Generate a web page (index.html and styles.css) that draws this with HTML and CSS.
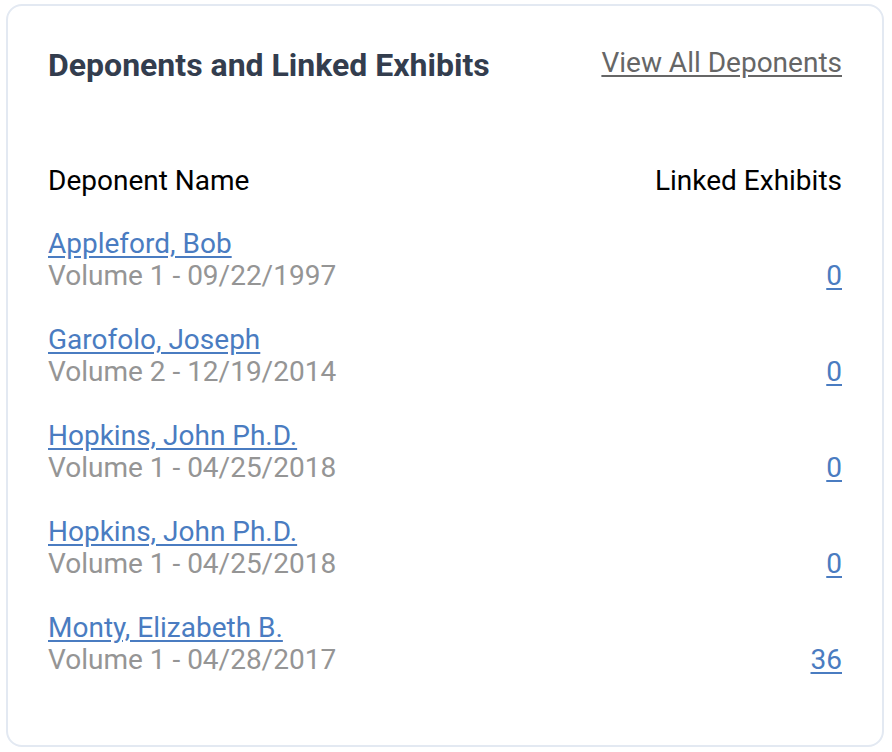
FILE: index.html
```html
<!DOCTYPE html>
<html>
<head>
<meta charset="utf-8">
<link rel="stylesheet" href="styles.css">
</head>
<body>
<div class="card">
  <div class="card-head">
    <h2 class="title">Deponents and Linked Exhibits</h2>
    <a class="view-all" href="#">View All Deponents</a>
  </div>
  <div class="table-head">
    <span>Deponent Name</span>
    <span>Linked Exhibits</span>
  </div>
  <ul class="rows">
    <li class="row">
      <div class="who"><a class="name" href="#">Appleford, Bob</a><span class="vol">Volume 1 - 09/22/1997</span></div>
      <a class="count" href="#">0</a>
    </li>
    <li class="row">
      <div class="who"><a class="name" href="#">Garofolo, Joseph</a><span class="vol">Volume 2 - 12/19/2014</span></div>
      <a class="count" href="#">0</a>
    </li>
    <li class="row">
      <div class="who"><a class="name" href="#">Hopkins, John Ph.D.</a><span class="vol">Volume 1 - 04/25/2018</span></div>
      <a class="count" href="#">0</a>
    </li>
    <li class="row">
      <div class="who"><a class="name" href="#">Hopkins, John Ph.D.</a><span class="vol">Volume 1 - 04/25/2018</span></div>
      <a class="count" href="#">0</a>
    </li>
    <li class="row">
      <div class="who"><a class="name" href="#">Monty, Elizabeth B.</a><span class="vol">Volume 1 - 04/28/2017</span></div>
      <a class="count" href="#">36</a>
    </li>
  </ul>
</div>
</body>
</html>
```
FILE: styles.css
```css
html, body {
  margin: 0;
  padding: 0;
  background: #ffffff;
}
body {
  font-family: Roboto, "Liberation Sans", Arial, sans-serif;
  padding: 4px 8px 0 6px;
}
.card {
  box-sizing: border-box;
  width: 878px;
  height: 743px;
  border: 2px solid #e3e9f2;
  border-radius: 16px;
  padding: 39px 40px 0 40px;
  background: #fff;
}
.card-head {
  display: flex;
  justify-content: space-between;
  align-items: flex-start;
}
.title {
  margin: 0;
  font-size: 32px;
  line-height: 40px;
  font-weight: 700;
  color: #333d4e;
}
.view-all {
  font-size: 28px;
  line-height: 36px;
  color: #666666;
  text-decoration: underline;
  text-underline-offset: 3px;
}
.table-head {
  display: flex;
  justify-content: space-between;
  margin-top: 80px;
  font-size: 28px;
  line-height: 32px;
  color: #000;
}
.rows {
  list-style: none;
  margin: 31px 0 0;
  padding: 0;
  display: flex;
  flex-direction: column;
  gap: 32px;
}
.row {
  display: flex;
  justify-content: space-between;
  align-items: flex-end;
  font-size: 28px;
  line-height: 32px;
}
.who {
  display: flex;
  flex-direction: column;
  align-items: flex-start;
}
.name, .count {
  color: #4a7cc1;
  text-decoration: underline;
  text-underline-offset: 3px;
}
.vol {
  color: #959595;
}
```
